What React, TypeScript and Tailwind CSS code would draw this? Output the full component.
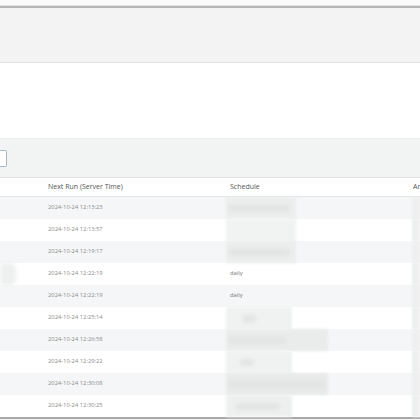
import React from 'react';

type Row = { next: string; schedule?: string; blob?: { w: number; tone: string; pill?: number; x?: number } };

const rows: Row[] = [
  { next: '2024-10-24 12:13:23', blob: { w: 70, tone: 'bg-[#eceded]', pill: 62 } },
  { next: '2024-10-24 12:13:57', blob: { w: 70, tone: 'bg-[#f1f2f2]', pill: 0 } },
  { next: '2024-10-24 12:19:17', blob: { w: 70, tone: 'bg-[#eceded]', pill: 62 } },
  { next: '2024-10-24 12:22:19', schedule: 'daily' },
  { next: '2024-10-24 12:22:19', schedule: 'daily' },
  { next: '2024-10-24 12:25:14', blob: { w: 66, tone: 'bg-[#f0f1f1]', pill: 14, x: 16 } },
  { next: '2024-10-24 12:26:58', blob: { w: 102, tone: 'bg-[#eaebeb]', pill: 58 } },
  { next: '2024-10-24 12:29:22', blob: { w: 66, tone: 'bg-[#f0f1f1]', pill: 14, x: 14 } },
  { next: '2024-10-24 12:30:08', blob: { w: 102, tone: 'bg-[#e9eaea]', pill: 98 } },
  { next: '2024-10-24 12:30:25', blob: { w: 66, tone: 'bg-[#eeefef]', pill: 44, x: 10 } },
];

const App: React.FC = () => {
  return (
    <div className="w-[420px] h-[420px] overflow-hidden bg-white flex flex-col font-['Open_Sans',sans-serif]">
      {/* window top edge */}
      <div className="h-[5px] bg-[#fafafa] shrink-0"></div>
      <div className="h-px bg-[#e2e2e2] shrink-0"></div>
      <div className="h-[2px] bg-[#b6b6b6] shrink-0"></div>

      {/* page header */}
      <div className="h-[55px] bg-[#f2f3f2] border-b border-[#e0e2e0] shrink-0"></div>
      <div className="h-[76px] bg-white border-b border-[#eceef0] shrink-0"></div>

      {/* toolbar */}
      <div className="h-[39px] bg-[#f2f3f3] border-b border-[#dfe1e3] flex items-center shrink-0">
        <div className="w-[7px] h-[17px] bg-white border border-l-0 border-[#a9b6c4] rounded-r-[2px] mt-[1px]"></div>
      </div>

      {/* table */}
      <div className="flex flex-col shrink-0">
        <div className="grid grid-cols-[40px_182px_183px_1fr] h-[19px] items-center border-b border-[#e3e5e8] text-[7px] text-[#555] pt-px">
          <div></div>
          <div className="pl-2">Next Run (Server Time)</div>
          <div className="pl-2">Schedule</div>
          <div className="pl-2 whitespace-nowrap overflow-hidden">Ar</div>
        </div>

        {rows.map((row, i) => (
          <div
            key={i}
            className={`grid grid-cols-[40px_182px_183px_1fr] h-[22px] items-center text-[5.8px] text-[#8c8c8c] ${
              i % 2 === 0 ? 'bg-[#f5f6f8]' : 'bg-white'
            }`}
          >
            <div className="h-full">
              {i === 3 && <div className="w-[16px] h-full bg-[#eeefef] blur-[2px] rounded-r-md"></div>}
            </div>
            <div className="pl-2 pb-[2px]">{row.next}</div>
            <div className="h-full flex items-center">
              {row.schedule ? (
                <span className="pl-2 pb-[2px] text-[#777]">{row.schedule}</span>
              ) : (
                row.blob && (
                  <div className={`ml-[4px] h-full ${row.blob.tone} blur-[1.5px] flex items-center`} style={{ width: row.blob.w }}>
                    {row.blob.pill ? (
                      <div
                        className="h-[7px] rounded-full bg-[#e2e3e3] blur-[1.5px]"
                        style={{ width: row.blob.pill, marginLeft: row.blob.x ?? 2 }}
                      ></div>
                    ) : null}
                  </div>
                )
              )}
            </div>
            <div className="h-full">
              <div className="ml-[7px] h-full bg-[#eeefef] blur-[1px]"></div>
            </div>
          </div>
        ))}
      </div>

      {/* bottom edge */}
      <div className="h-[2px] bg-[#a8a8a8] shrink-0"></div>
      <div className="flex-1 bg-[#f3f3f3]"></div>
    </div>
  );
};

export default App;
